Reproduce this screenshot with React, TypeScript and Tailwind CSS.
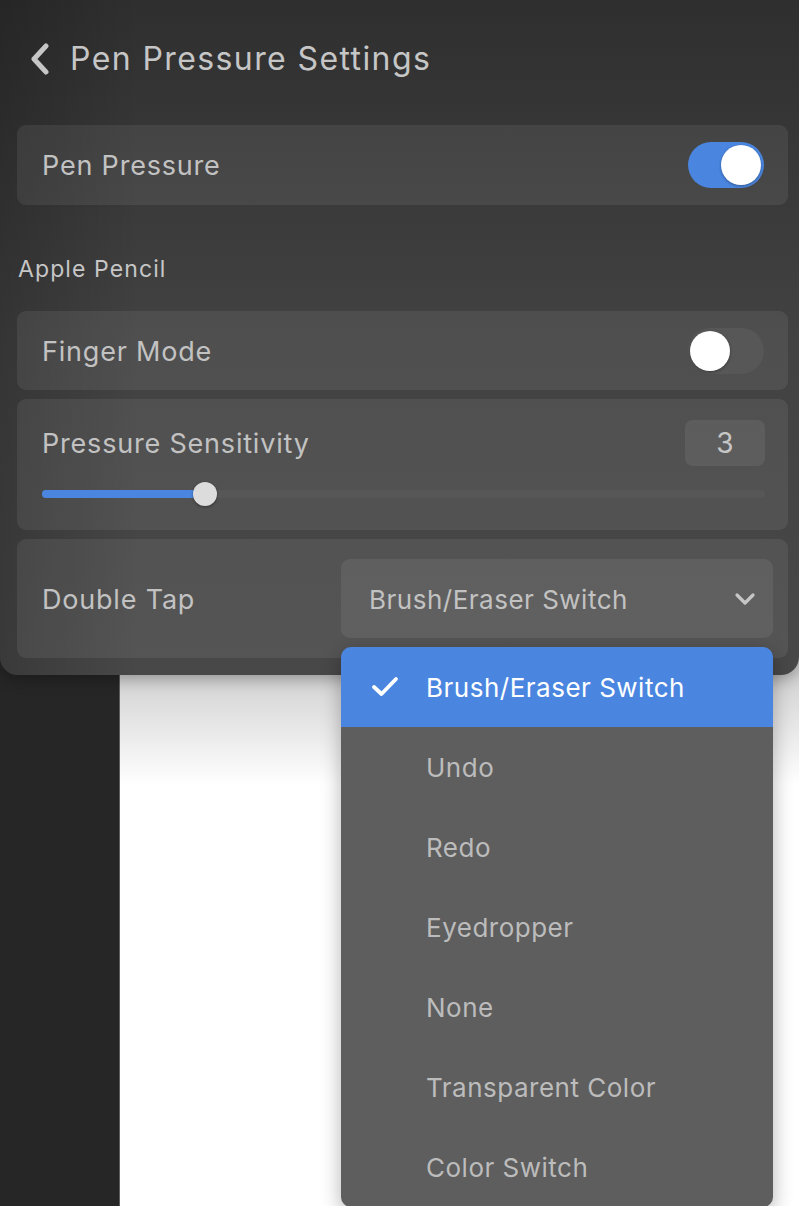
import { useState } from "react";

const options = [
  "Brush/Eraser Switch",
  "Undo",
  "Redo",
  "Eyedropper",
  "None",
  "Transparent Color",
  "Color Switch",
];

function Toggle({ on }: { on: boolean }) {
  return (
    <div
      className={`relative h-[46px] w-[76px] rounded-full ${
        on ? "bg-[#4a86e0]" : "bg-[#575757]"
      }`}
    >
      <div
        className={`absolute top-[3px] h-[40px] w-[40px] rounded-full bg-white shadow-[0_1px_3px_rgba(0,0,0,0.35)] ${
          on ? "right-[3px]" : "left-[2px]"
        }`}
      />
    </div>
  );
}

export default function App() {
  const [selected] = useState(options[0]);
  const level = 3;

  return (
    <div
      className="relative h-[1206px] w-full overflow-hidden"
      style={{ fontFamily: "Inter, 'Noto Sans', sans-serif" }}
    >
      {/* canvas behind the settings panel */}
      <div className="flex h-full">
        <div className="w-[119px] bg-[#262626]" />
        <div className="w-px bg-[#5c5c5c]" />
        <div className="flex-1 bg-white">
          <div className="h-[675px] bg-[#d0d0d0]" />
          <div className="h-[110px] bg-gradient-to-b from-[#d2d2d2] to-white" />
        </div>
      </div>

      {/* settings panel */}
      <div className="absolute left-0 right-0 top-0 rounded-b-[18px] bg-gradient-to-b from-[#2f2f2f] via-[#424242] to-[#484848] shadow-[0_4px_16px_rgba(0,0,0,0.3)]">
        <div className="pointer-events-none absolute inset-y-0 left-0 w-[140px] rounded-bl-[18px] bg-gradient-to-r from-black/20 to-transparent" />
        <div className="relative pb-[17px] pl-[17px] pr-[11px]">
          <div className="flex h-[125px] items-center gap-[20px] pb-[8px] pl-[13px]">
            <svg width="20" height="32" viewBox="0 0 20 32" fill="none">
              <path
                d="M16 3 L4 16 L16 29"
                stroke="#c6c6c6"
                strokeWidth="5"
                strokeLinecap="round"
                strokeLinejoin="round"
              />
            </svg>
            <h1 className="text-[32px] font-normal tracking-[1.4px] text-[#c6c6c6]">
              Pen Pressure Settings
            </h1>
          </div>

          <div className="flex h-[80px] items-center justify-between rounded-[9px] bg-white/[0.07] pl-[25px] pr-[24px]">
            <span className="pt-[3px] text-[27px] tracking-[0.8px] text-[#c2c2c2]">
              Pen Pressure
            </span>
            <Toggle on={true} />
          </div>

          <div className="flex h-[106px] items-center pl-[1px] pt-[22px] text-[23px] tracking-[1.1px] text-[#c6c6c6]">
            Apple Pencil
          </div>

          <div className="flex h-[79px] items-center justify-between rounded-[9px] bg-white/[0.07] pl-[25px] pr-[24px]">
            <span className="pt-[3px] text-[27px] tracking-[0.8px] text-[#c2c2c2]">
              Finger Mode
            </span>
            <Toggle on={false} />
          </div>

          <div className="mt-[9px] h-[131px] rounded-[9px] bg-white/[0.07] pl-[25px] pr-[23px] pt-[21px]">
            <div className="flex items-center justify-between">
              <span className="pt-[2px] text-[27px] tracking-[0.8px] text-[#c2c2c2]">
                Pressure Sensitivity
              </span>
              <div className="flex h-[46px] w-[80px] items-center justify-center rounded-[8px] bg-white/[0.07] text-[28px] text-[#c6c6c6]">
                {level}
              </div>
            </div>
            <div className="relative mt-[24px] h-[8px] rounded-full bg-[#575757]">
              <div className="absolute inset-y-0 left-0 w-[163px] rounded-full bg-[#4a86e0]" />
              <div className="absolute left-[151px] top-[-8px] h-[24px] w-[24px] rounded-full bg-[#dcdcdc] shadow-[0_1px_3px_rgba(0,0,0,0.4)]" />
            </div>
          </div>

          <div className="relative mt-[9px] flex h-[119px] items-start justify-between rounded-[9px] bg-white/[0.07] pl-[25px] pr-[15px] pt-[20px]">
            <span className="flex h-[79px] items-center pt-[3px] text-[27px] tracking-[0.8px] text-[#c2c2c2]">
              Double Tap
            </span>
            <div className="flex h-[79px] w-[432px] items-center justify-between rounded-[9px] bg-white/[0.07] pl-[28px] pr-[17px]">
              <span className="pt-[2px] text-[26px] tracking-[0.5px] text-[#c2c2c2]">
                {selected}
              </span>
              <svg width="22" height="14" viewBox="0 0 22 14" fill="none">
                <path
                  d="M3 3 L11 11 L19 3"
                  stroke="#c6c6c6"
                  strokeWidth="3.2"
                  strokeLinecap="round"
                  strokeLinejoin="round"
                />
              </svg>
            </div>

            {/* dropdown menu */}
            <div className="absolute left-[324px] top-[108px] z-10 w-[432px] overflow-hidden rounded-[10px] bg-[#5e5e5e] shadow-[0_6px_20px_rgba(0,0,0,0.3)]">
              {options.map((o) => {
                const active = o === selected;
                return (
                  <div
                    key={o}
                    className={`flex h-[80px] items-center ${
                      active ? "bg-[#4a86e0] text-white" : "text-[#bcbcbc]"
                    }`}
                  >
                    <div className="flex w-[85px] justify-center pl-[3px]">
                      {active && (
                        <svg width="28" height="22" viewBox="0 0 28 22" fill="none">
                          <path
                            d="M3 11 L10.5 18 L25 3"
                            stroke="white"
                            strokeWidth="3.8"
                            strokeLinecap="round"
                            strokeLinejoin="round"
                          />
                        </svg>
                      )}
                    </div>
                    <span className="text-[26px] tracking-[0.5px]">{o}</span>
                  </div>
                );
              })}
            </div>
          </div>
        </div>
      </div>
    </div>
  );
}
